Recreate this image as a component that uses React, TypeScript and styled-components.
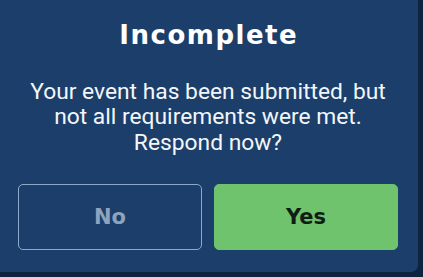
import React from 'react';
import styled, { createGlobalStyle } from 'styled-components';

const GlobalStyle = createGlobalStyle`
  html, body {
    margin: 0;
    padding: 0;
    background: #0e2340;
  }
  * {
    box-sizing: border-box;
  }
`;

const App: React.FC = () => {
  return (
    <Screen>
      <GlobalStyle />
      <Dialog>
        <Title>Incomplete</Title>
        <Message>
          Your event has been submitted, but
          <br />
          not all requirements were met.
          <br />
          Respond now?
        </Message>
        <Actions>
          <ActionButton>No</ActionButton>
          <ActionButton primary>Yes</ActionButton>
        </Actions>
      </Dialog>
    </Screen>
  );
};

export default App;

const Screen = styled.div`
  width: 423px;
  height: 277px;
  background: #0e2340;
  overflow: hidden;
`;

const Dialog = styled.div`
  width: 418px;
  height: 272px;
  background: #1b3f6a;
  border-bottom-right-radius: 7px;
  padding: 20px 20px 0 18px;
  display: flex;
  flex-direction: column;
  align-items: center;
`;

const Title = styled.h1`
  margin: 0;
  padding-left: 1.5px;
  font-family: 'DejaVu Sans', 'Open Sans', sans-serif;
  font-weight: 700;
  font-size: 26px;
  line-height: 30px;
  letter-spacing: 1.5px;
  color: #ffffff;
  text-align: center;
`;

const Message = styled.p`
  margin: 29px 0 0;
  font-family: Roboto, 'Liberation Sans', sans-serif;
  font-size: 22.8px;
  line-height: 25.3px;
  color: #f4f6fa;
  text-align: center;
`;

const Actions = styled.div`
  margin-top: 29px;
  width: 100%;
  display: grid;
  grid-template-columns: 1fr 1fr;
  gap: 12px;
`;

const ActionButton = styled.button<{ primary?: boolean }>`
  height: 66px;
  border-radius: 5px;
  border: 1.5px solid ${({ primary }) => (primary ? '#6fc36c' : '#8eaacb')};
  background: ${({ primary }) => (primary ? '#6fc36c' : 'transparent')};
  color: ${({ primary }) => (primary ? '#0f1d14' : '#8ea3bd')};
  font-family: 'DejaVu Sans', 'Open Sans', sans-serif;
  font-weight: 700;
  font-size: 21px;
  cursor: pointer;
`;
